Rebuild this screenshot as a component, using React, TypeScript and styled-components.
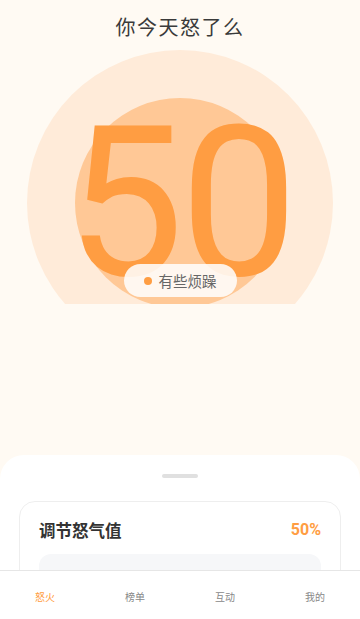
import styled, { createGlobalStyle } from 'styled-components'

const GlobalStyle = createGlobalStyle`
  html, body {
    margin: 0;
    padding: 0;
    background: #FFFAF3;
  }
  body {
    font-family: "Noto Sans CJK SC", "Noto Sans", sans-serif;
  }
`

const Page = styled.div`
  height: 100vh;
  display: flex;
  flex-direction: column;
  overflow: hidden;
  background: #FFFAF3;
`

const Title = styled.h1`
  margin: 13px 0 9px;
  font-size: 20px;
  line-height: 28px;
  font-weight: 400;
  letter-spacing: 1.5px;
  color: #3a3a3a;
  text-align: center;
`

const Hero = styled.div`
  height: 254px;
  flex-shrink: 0;
  display: flex;
  justify-content: center;
  overflow: hidden;
`

const Ring = styled.div`
  width: 306px;
  height: 306px;
  flex-shrink: 0;
  border-radius: 50%;
  background: #FFEBD9;
  display: grid;
  place-items: center;
`

const Core = styled.div`
  grid-area: 1 / 1;
  width: 210px;
  height: 210px;
  border-radius: 50%;
  background: #FFC896;
`

const Score = styled.div`
  grid-area: 1 / 1;
  font-family: Roboto, "Liberation Sans", sans-serif;
  font-size: 210px;
  line-height: 1;
  letter-spacing: -4px;
  color: #FF9D42;
`

const Mood = styled.div`
  grid-area: 1 / 1;
  align-self: end;
  margin-bottom: 59px;
  height: 33px;
  padding: 0 20px;
  display: flex;
  align-items: center;
  gap: 7px;
  border-radius: 17px;
  background: rgba(255, 255, 255, 0.86);
  font-size: 14.5px;
  color: #666;
`

const Dot = styled.span`
  width: 8px;
  height: 8px;
  border-radius: 50%;
  background: #FF9D42;
`

const Spacer = styled.div`
  flex: 1;
`

const Sheet = styled.div`
  height: 115px;
  flex-shrink: 0;
  background: #fff;
  border-radius: 24px 24px 0 0;
  overflow: hidden;
  display: flex;
  flex-direction: column;
  align-items: center;
`

const Handle = styled.div`
  margin-top: 19px;
  width: 36px;
  height: 4px;
  border-radius: 2px;
  background: #E0E0E0;
  flex-shrink: 0;
`

const Card = styled.div`
  align-self: stretch;
  margin: 23px 19px 0;
  padding: 17px 19px;
  border: 1px solid #EEEEEE;
  border-radius: 16px;
  display: flex;
  flex-direction: column;
  gap: 13px;
`

const CardHead = styled.div`
  display: flex;
  justify-content: space-between;
  align-items: center;
  line-height: 22px;
`

const CardTitle = styled.span`
  font-size: 16.5px;
  font-weight: 700;
  color: #333;
`

const Percent = styled.span`
  font-family: Roboto, "Liberation Sans", sans-serif;
  font-size: 16px;
  font-weight: 700;
  color: #FF9D42;
`

const Track = styled.div`
  height: 100px;
  border-radius: 12px;
  background: #F6F7F9;
`

const TabBar = styled.nav`
  height: 48px;
  flex-shrink: 0;
  border-top: 1px solid #E6E6E6;
  background: #fff;
  display: grid;
  grid-template-columns: repeat(4, 1fr);
`

const Tab = styled.div<{ $active?: boolean }>`
  display: flex;
  align-items: center;
  justify-content: center;
  padding-top: 3px;
  font-size: 10px;
  color: ${(p) => (p.$active ? '#FF9D42' : '#888')};
`

const tabs = ['怒火', '榜单', '互动', '我的']

export default function App() {
  return (
    <Page>
      <GlobalStyle />
      <Title>你今天怒了么</Title>
      <Hero>
        <Ring>
          <Core />
          <Score>50</Score>
          <Mood>
            <Dot />
            有些烦躁
          </Mood>
        </Ring>
      </Hero>
      <Spacer />
      <Sheet>
        <Handle />
        <Card>
          <CardHead>
            <CardTitle>调节怒气值</CardTitle>
            <Percent>50%</Percent>
          </CardHead>
          <Track />
        </Card>
      </Sheet>
      <TabBar>
        {tabs.map((t, i) => (
          <Tab key={t} $active={i === 0}>{t}</Tab>
        ))}
      </TabBar>
    </Page>
  )
}
